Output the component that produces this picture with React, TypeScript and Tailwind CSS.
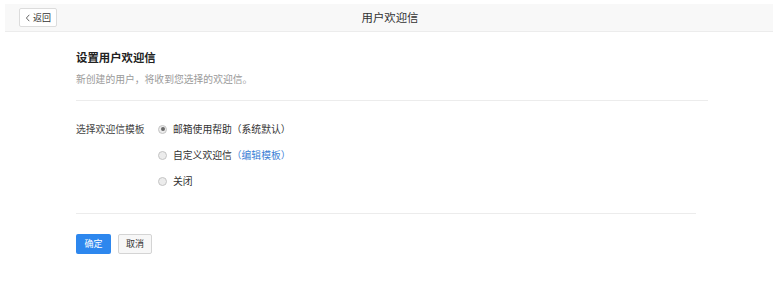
import { useState } from 'react'

const options = [
  { id: 'help', label: '邮箱使用帮助（系统默认）' },
  { id: 'custom', label: '自定义欢迎信', link: '（编辑模板）' },
  { id: 'off', label: '关闭' },
]

function Radio({ checked }: { checked: boolean }) {
  return (
    <span className="flex h-[9px] w-[9px] items-center justify-center rounded-full border border-[#c4c4c4] bg-[#ececec]">
      {checked && <span className="h-[4px] w-[4px] rounded-full bg-[#6a6a6a]" />}
    </span>
  )
}

export default function App() {
  const [selected, setSelected] = useState('help')

  return (
    <div
      className="min-h-[299px] bg-white pl-[5px] pt-[4px] text-[#333]"
      style={{ fontFamily: '"Noto Sans CJK SC", "Liberation Sans", sans-serif' }}
    >
      <div className="flex h-[28px] items-center border-b border-[#ececec] bg-[#f8f8f8] pl-[14px]">
        <button className="flex h-[19px] w-[38px] items-center justify-center gap-[2px] rounded-[2px] border border-[#dcdcdc] bg-white text-[9px] text-[#333]">
          <svg width="6" height="8" viewBox="0 0 6 8" fill="none">
            <path d="M4.3 0.8 L1.4 4 L4.3 7.2" stroke="#555" strokeWidth="0.9" />
          </svg>
          返回
        </button>
        <div className="flex-1 pr-[50px] text-center text-[11.4px] leading-none text-[#333]">用户欢迎信</div>
      </div>

      <div className="ml-[71px]">
        <h1 className="mt-[17px] text-[11.4px] font-bold leading-[16px] text-[#222]">设置用户欢迎信</h1>
        <p className="mt-[7px] text-[9.8px] leading-[14px] text-[#9a9a9a]">新创建的用户，将收到您选择的欢迎信。</p>
        <div className="mt-[14px] h-px w-[632px] bg-[#ececec]" />

        <div className="mt-[20px] flex">
          <div className="w-[82px] text-[9.8px] leading-[16px] text-[#444]">选择欢迎信模板</div>
          <div className="flex flex-col gap-[10px]">
            {options.map((o) => (
              <label
                key={o.id}
                className="flex h-[16px] cursor-pointer items-center gap-[6px] text-[9.8px] text-[#333]"
                onClick={() => setSelected(o.id)}
              >
                <Radio checked={selected === o.id} />
                <span>
                  {o.label}
                  {o.link && <a className="text-[#3b7fd6]">{o.link}</a>}
                </span>
              </label>
            ))}
          </div>
        </div>

        <div className="mt-[24px] h-px w-[620px] bg-[#ececec]" />

        <div className="mt-[20px] flex gap-[7px]">
          <button className="h-[20px] w-[35px] rounded-[2px] bg-[#2d87ee] text-[9px] text-white">确定</button>
          <button className="h-[20px] w-[34px] rounded-[2px] border border-[#d4d4d4] bg-[#f7f7f7] text-[9px] text-[#333]">取消</button>
        </div>
      </div>
    </div>
  )
}
